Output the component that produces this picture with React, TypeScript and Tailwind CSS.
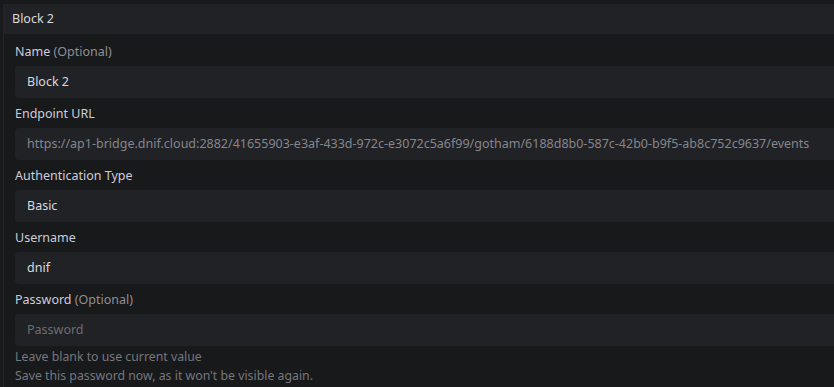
import React from 'react';

const font = { fontFamily: '"Noto Sans", "Open Sans", sans-serif' };

interface FieldProps {
  label: string;
  optional?: boolean;
  value?: string;
  placeholder?: string;
  muted?: boolean;
}

const Field: React.FC<FieldProps> = ({ label, optional, value, placeholder, muted }) => (
  <div className="flex flex-col">
    <div className="h-[18px] leading-[20px] text-[12.5px] text-[#ccccdc] mb-[6px]">
      {label}
      {optional ? <span className="text-[#8e8e95]"> (Optional)</span> : null}
    </div>
    <div className="h-8 rounded-l-[4px] bg-[#212226] flex items-center pl-3 text-[12.5px] whitespace-nowrap overflow-hidden">
      {value ? (
        <span className={muted ? 'text-[#85858c]' : 'text-[#d8d9de]'}>{value}</span>
      ) : (
        <span className="text-[#6c6c73]">{placeholder}</span>
      )}
    </div>
  </div>
);

export default function App() {
  return (
    <div className="w-[834px] h-[387px] bg-[#18191b] pt-1 overflow-hidden" style={font}>
      <div className="ml-[3px] border-l border-[#232428] h-full">
        <div className="h-[30px] bg-[#212226] flex items-center pl-2 text-[12.5px] text-[#d8d9de]">Block 2</div>
        <div className="pl-[11px] pt-2 flex flex-col gap-[6px]">
          <Field label="Name" optional value="Block 2" />
          <Field
            label="Endpoint URL"
            muted
            value="https://ap1-bridge.dnif.cloud:2882/41655903-e3af-433d-972c-e3072c5a6f99/gotham/6188d8b0-587c-42b0-b9f5-ab8c752c9637/events"
          />
          <Field label="Authentication Type" value="Basic" />
          <Field label="Username" value="dnif" />
          <div className="flex flex-col">
            <Field label="Password" optional placeholder="Password" />
            <div className="mt-[1px] text-[12.3px] leading-[19px] text-[#76767d]">
              <div>Leave blank to use current value</div>
              <div>Save this password now, as it won't be visible again.</div>
            </div>
          </div>
        </div>
      </div>
    </div>
  );
}
